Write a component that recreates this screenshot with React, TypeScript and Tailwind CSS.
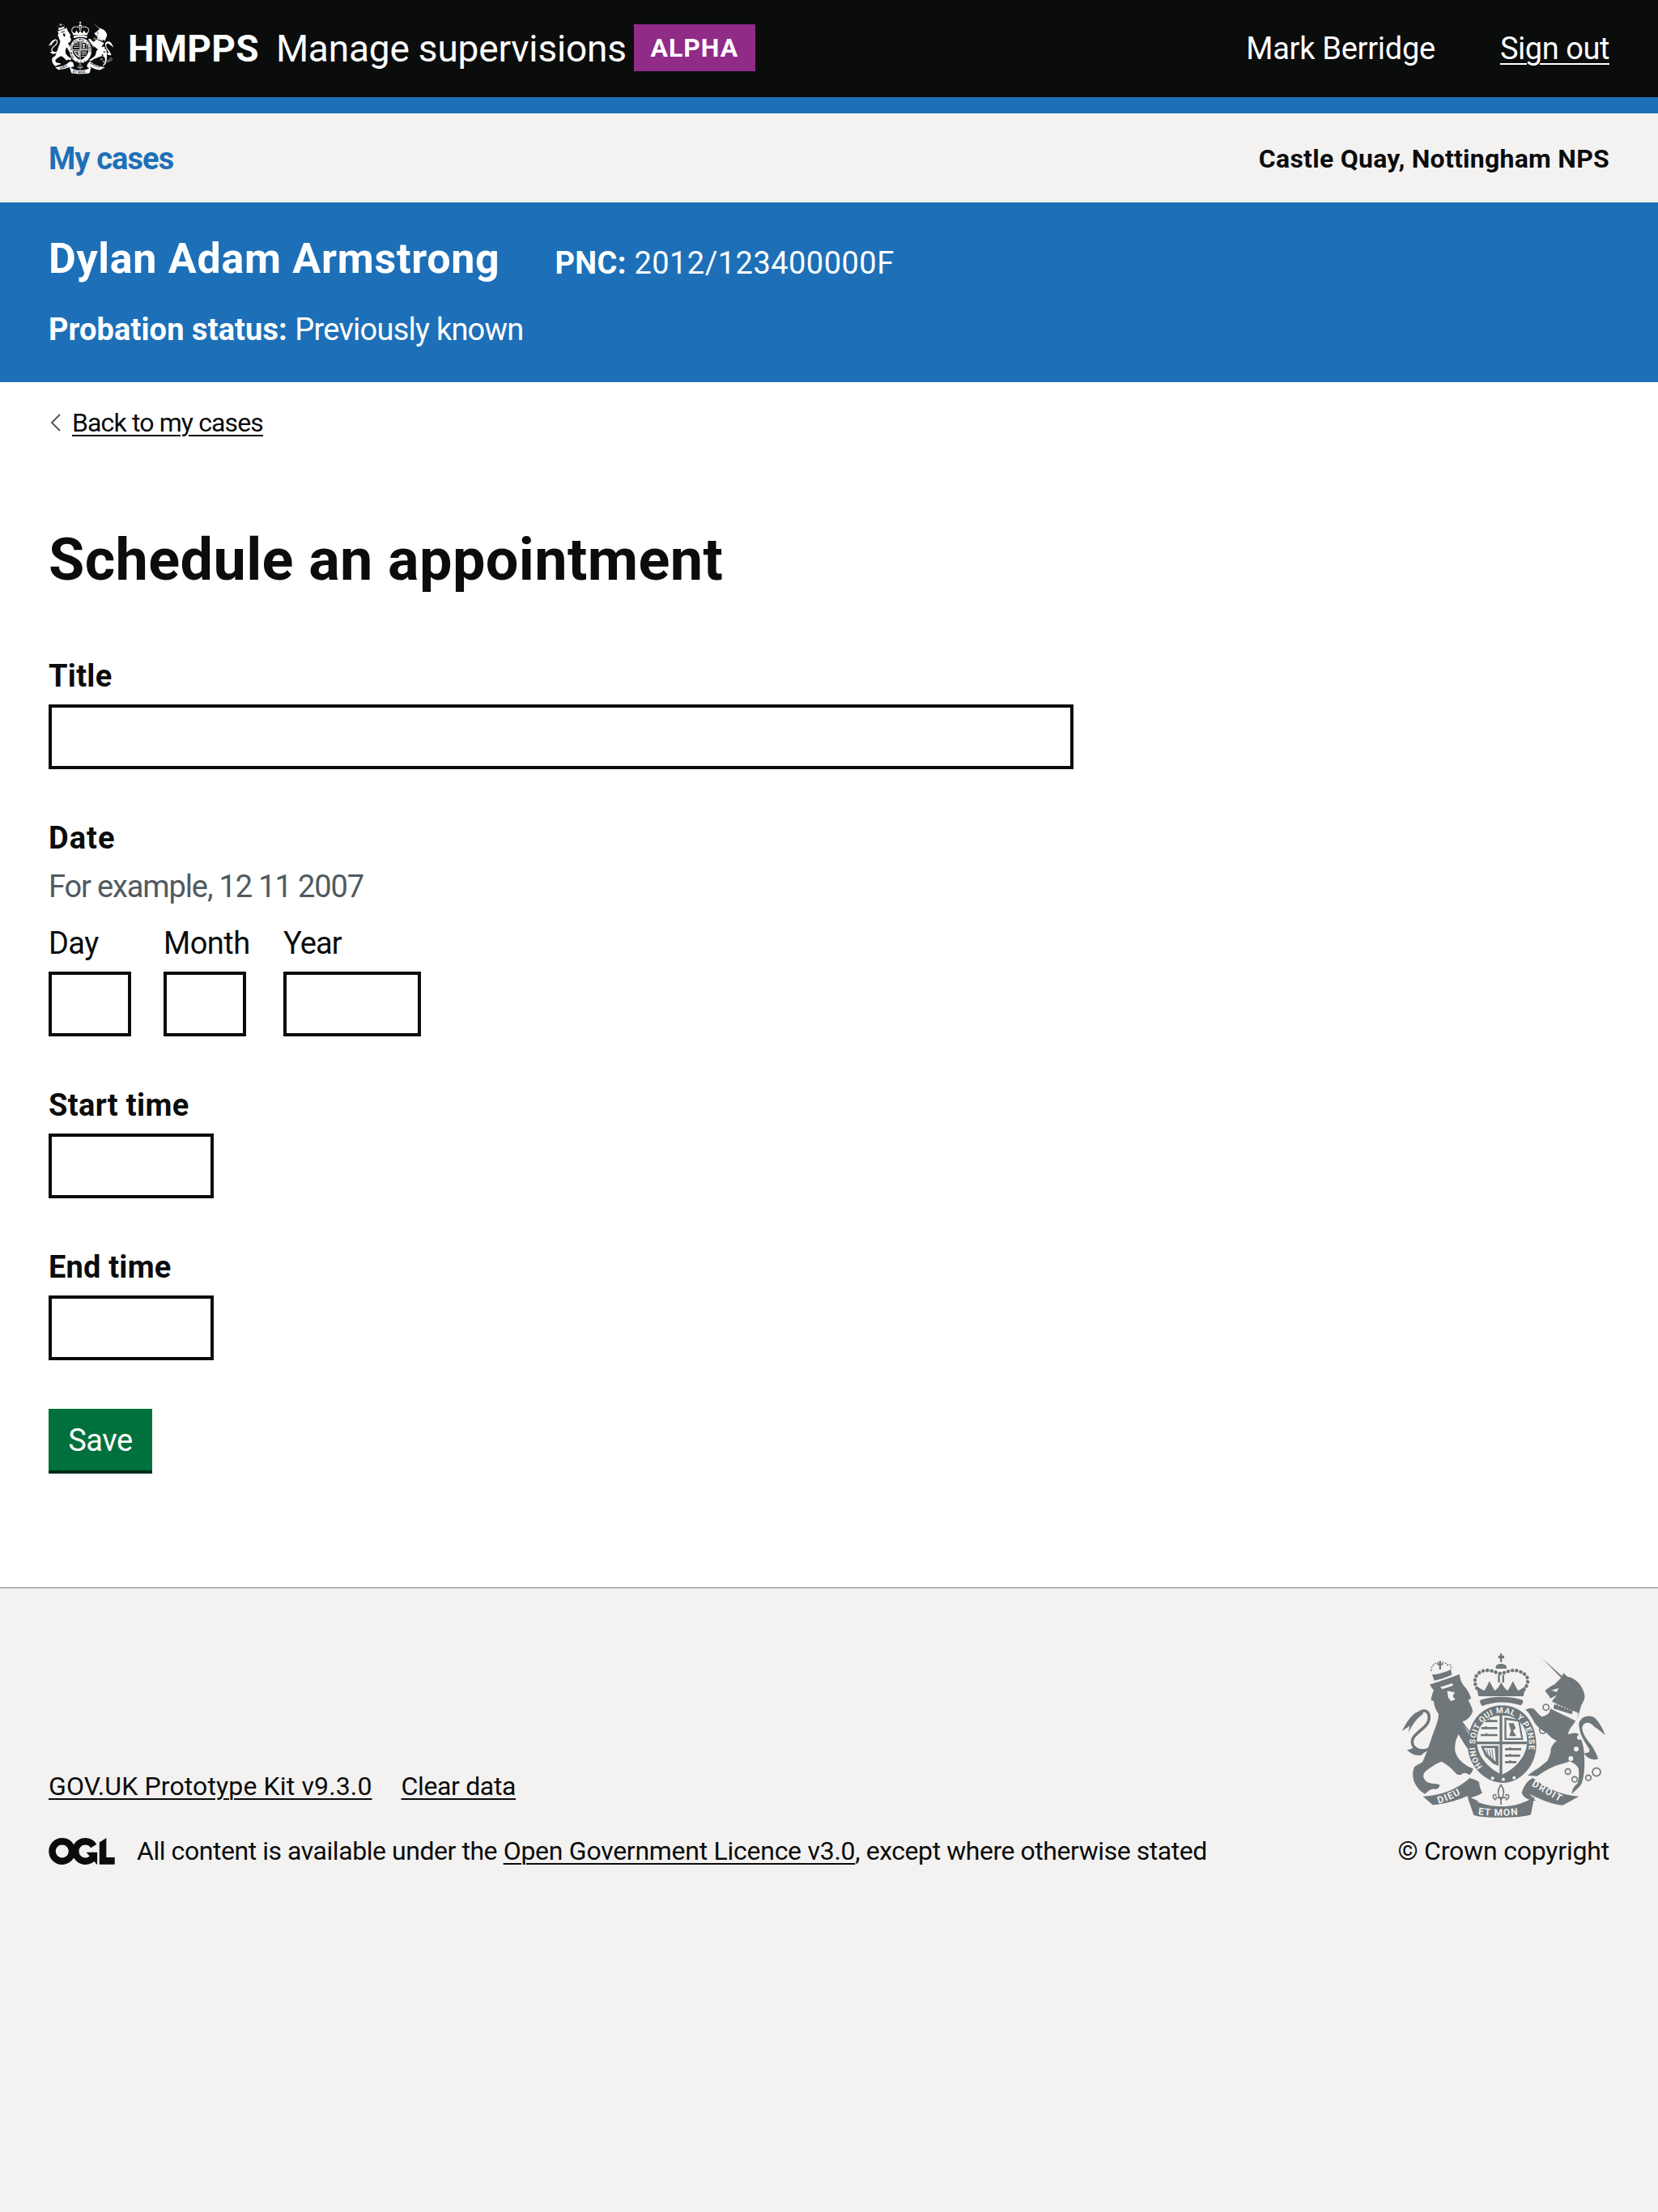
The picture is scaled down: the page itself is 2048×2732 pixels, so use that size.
const ink = "#0b0c0c";

const Crest = ({ fill, bg, id, className }: { fill: string; bg: string; id: string; className: string }) => (
  <svg viewBox="155 125 750 612" className={className} aria-hidden="true">
    <defs>
      <path id={`${id}-garter`} d="M452 545 A100 118 0 1 1 598 545" />
      <path id={`${id}-dieu`} d="M290 682 C330 670 370 652 402 624" />
      <path id={`${id}-mon`} d="M436 722 C480 729 560 729 612 720" />
      <path id={`${id}-droit`} d="M634 616 C670 634 710 660 752 682" />
    </defs>
    <g fill={fill}>
      {/* lion */}
      <path d="M258 240 C290 230 335 215 368 202 C368 222 378 240 392 255 C402 270 408 282 410 292 L400 298 C408 315 416 328 416 340 C410 358 398 372 378 378 C385 400 405 430 428 458 C436 470 432 484 418 486 C404 488 395 476 386 462 C378 448 370 435 364 425 C352 445 348 470 352 490 C358 515 385 540 418 552 C416 562 410 572 404 576 C396 568 388 566 380 570 C372 578 362 578 354 570 C340 552 320 535 300 526 C280 535 255 550 238 566 C230 578 232 590 248 602 C262 610 280 606 294 612 C294 622 288 630 276 628 C262 626 252 634 240 646 C226 640 214 628 205 612 C195 595 190 570 200 546 C210 538 222 535 230 528 C245 500 262 440 280 395 C285 380 290 365 290 350 C280 335 272 318 272 302 L262 300 C262 285 268 272 272 262 C266 255 260 248 258 240 Z" />
      <path d="M232 336 C195 340 170 380 155 414 C168 402 176 400 184 392 C180 405 180 410 178 418 C190 400 200 372 232 350 Z" />
      <path d="M258 478 C218 498 182 472 195 440 C212 410 262 395 254 354 C250 338 236 334 222 342" fill="none" stroke={fill} strokeWidth="11" />
      <path d="M196 476 L172 484 C190 494 196 506 226 502 L246 486 Z" />
      {/* lion crown */}
      <path d="M266 204 L274 226 C295 222 320 214 340 204 L334 186 C312 196 290 202 266 204 Z" />
      <path d="M285 162 h7 v-9 h7 v9 h7 v7 h-7 v16 h-7 v-16 h-7 z" />
      {/* crown */}
      <path d="M511 133 h7 v-7 h7 v7 h8 v11 h-8 v14 h-7 v-14 h-7 z" />
      <path d="M502 176 C502 160 540 160 542 176 L542 182 L502 182 Z" />
      <path d="M510 205 h7 v28 h-7 z M526 205 h7 v28 h-7 z" />
      <path d="M522 232 C528 245 536 256 546 264 C552 252 560 240 566 228 C572 242 578 254 586 264 C594 258 604 252 612 248 L604 284 L438 284 L430 248 C440 252 450 258 458 264 C466 254 472 242 478 228 C484 240 492 252 498 264 C508 256 516 245 522 232 Z" />
      <path d="M444 298 C490 282 555 282 602 298 C604 306 600 314 594 318 C550 302 495 302 452 320 C446 314 442 306 444 298 Z" />
      {/* garter */}
      <path fillRule="evenodd" d="M525 318 C605 318 652 385 652 465 C652 545 590 605 530 605 C465 605 398 545 398 465 C398 385 445 318 525 318 Z M525 355 C465 355 432 395 432 450 C432 510 480 555 525 575 C570 555 618 510 618 450 C618 395 585 355 525 355 Z" />
      {/* shield quarters */}
      <path d="M462 372 h12 l5 -4 l5 4 h24 v8 h-46 z M448 398 h12 l5 -4 l5 4 h38 v8 h-60 z M446 424 h16 l5 -4 l5 4 h36 v8 h-62 z" />
      <path fillRule="evenodd" d="M534 362 L590 372 L604 446 L534 446 Z M541 372 L541 439 L596 439 L585 378 Z" />
      <path d="M550 384 L568 384 L576 402 L566 412 L578 432 L552 432 L558 412 Z" />
      <path d="M536 476 h14 l5 -4 l5 4 h36 v8 h-60 z M536 500 h14 l5 -4 l5 4 h32 v8 h-56 z M536 524 h14 l5 -4 l5 4 h18 v8 h-42 z" />
      <path fillRule="evenodd" d="M446 468 L512 468 L512 542 L492 534 L462 505 Z M458 476 L498 476 L502 526 L470 498 Z" />
      <path d="M468 480 L474 502 M478 480 L484 510 M488 480 L492 518" stroke={fill} strokeWidth="3" />
      <path d="M516 348 h10 v232 h-10 z M428 452 h190 v10 h-190 z" />
      {/* unicorn */}
      <path d="M672 142 L748 210 L752 198 L768 212 C790 215 812 232 822 255 C830 270 834 285 830 295 L818 320 C812 345 805 362 800 372 C785 395 772 408 770 425 C785 420 800 418 808 424 C822 445 830 475 830 510 C832 545 830 580 820 608 C812 622 798 632 784 646 C784 632 790 618 804 608 C810 590 812 570 808 550 C800 538 788 530 776 525 C760 532 745 535 730 540 C715 545 700 552 690 558 C675 565 665 575 655 580 L620 578 C632 568 645 558 660 550 C672 540 684 532 692 525 C700 510 706 495 706 478 C712 465 718 455 728 450 C712 442 700 432 690 420 C672 410 650 395 640 372 C632 358 625 345 612 334 C622 328 634 326 642 330 C652 340 660 352 672 360 C684 358 694 352 700 345 C706 330 708 315 712 300 C718 292 724 286 728 280 L704 292 L698 282 L684 264 C695 252 710 245 722 238 C730 230 738 222 744 216 Z" />
      <path d="M812 402 C800 370 840 345 870 365 C885 380 900 405 906 428 C890 412 880 405 868 398 C850 375 825 378 822 402 C825 440 860 460 870 490 C880 505 878 512 882 516 C860 525 835 510 830 495 C845 495 852 490 848 480 C835 455 815 435 812 402 Z" />
      {/* scroll */}
      <path d="M232 655 C300 652 360 628 405 587 C420 590 432 596 440 602 C440 615 446 630 452 642 C438 652 422 656 410 660 L440 674 C420 676 404 670 396 654 C360 670 320 682 268 687 Z" />
      <path d="M398 660 C440 680 470 692 522 692 C570 692 610 680 645 655 L632 722 C600 737 450 737 420 724 Z" />
      <path d="M640 587 C680 620 740 650 810 655 L750 688 C710 685 665 665 628 646 L650 672 C622 670 604 660 598 642 C606 614 622 594 640 587 Z" />
    </g>
    <g fill="none" stroke={fill}>
      <path d="M262 190 C262 155 310 150 322 168 C340 160 340 185 330 192" strokeWidth="5" strokeDasharray="5 5" />
      <path d="M432 255 C405 205 455 170 508 198 C535 210 560 165 612 205 C630 225 615 250 606 260" strokeWidth="13" strokeDasharray="1 15" strokeLinecap="round" />
      <path d="M375 378 L428 448" strokeWidth="5" />
      <circle cx="688" cy="325" r="11" strokeWidth="5" />
      <circle cx="676" cy="410" r="12" strokeWidth="5" />
      <circle cx="769" cy="563" r="10" strokeWidth="5" />
      <circle cx="794" cy="592" r="10" strokeWidth="5" />
      <circle cx="845" cy="586" r="10" strokeWidth="5" />
      <circle cx="875" cy="565" r="15" strokeWidth="5" />
      {/* fleur */}
      <path d="M521 612 C508 630 508 650 521 668 C534 650 534 630 521 612 Z M505 652 C488 640 488 665 504 668 M537 652 C554 640 554 665 538 668 M500 660 H542 M521 668 V686" strokeWidth="5" />
    </g>
    <g fill={bg}>
      <path d="M296 250 L340 236 L344 244 L304 258 Z" />
      <path d="M322 264 L350 270 L342 284 L352 296 L336 302 L325 288 Z" />
      <circle cx="812" cy="436" r="9" />
      <circle cx="800" cy="480" r="9" />
      <circle cx="780" cy="515" r="9" />
      <circle cx="490" cy="588" r="6" />
      <circle cx="530" cy="592" r="6" />
      <circle cx="570" cy="586" r="6" />
      <path d="M710 304 L808 346 L800 376 L704 330 Z" />
      <path d="M708 262 L735 254 L728 268 Z" />
    </g>
    <g fill={fill}>
      <path d="M716 322 l4 -10 l5 6 l5 -8 l5 12 l6 -8 l5 12 l6 -8 l5 12 l6 -8 l5 12 l6 -8 l5 12 l5 -7 l3 12 l-4 8 L716 330 Z" />
    </g>
    <g fill={bg} fontFamily="Roboto, sans-serif" fontWeight="700">
      <text fontSize="30" letterSpacing="2"><textPath href={`#${id}-garter`}>HONI SOIT QUI MAL Y PENSE</textPath></text>
      <text fontSize="36" letterSpacing="4"><textPath href={`#${id}-dieu`}>DIEU</textPath></text>
      <text fontSize="36" letterSpacing="3"><textPath href={`#${id}-mon`}>ET MON</textPath></text>
      <text fontSize="36" letterSpacing="4"><textPath href={`#${id}-droit`}>DROIT</textPath></text>
    </g>
  </svg>
);

const Field = ({ label, width, tracking }: { label: string; width: string; tracking: string }) => (
  <div className="mb-[60px]">
    <label className={`block h-[50px] mb-[10px] text-[38px] leading-[50px] font-bold ${tracking}`}>{label}</label>
    <div className={`h-[80px] border-[4px] border-[#0b0c0c] ${width}`} />
  </div>
);

const DatePart = ({ label, width, gap, tracking }: { label: string; width: string; gap: string; tracking: string }) => (
  <div className={gap}>
    <div className={`h-[50px] mb-[10px] text-[38px] leading-[50px] ${tracking}`}>{label}</div>
    <div className={`h-[80px] border-[4px] border-[#0b0c0c] ${width}`} />
  </div>
);

export default function App() {
  return (
    <div className="min-h-[2732px] flex flex-col bg-white text-[#0b0c0c] font-['Roboto',sans-serif]">
      <header className="h-[120px] bg-[#0b0c0c] text-white flex items-center justify-between pl-[60px] pr-[60px]">
        <div className="flex items-center">
          <Crest fill="#ffffff" bg={ink} id="head" className="w-[80px] h-[66px] mt-[-2px]" />
          <span className="ml-[18px] text-[46px] leading-[60px] font-bold tracking-[0.3px]">HMPPS</span>
          <span className="ml-[21px] text-[46px] leading-[60px] tracking-[-0.18px]">Manage supervisions</span>
          <span className="ml-[9px] h-[58px] w-[150px] mt-[-2px] bg-[#912b88] flex items-center justify-center text-[32px] font-bold tracking-[1px]">ALPHA</span>
        </div>
        <div className="flex items-center text-[38px] leading-[50px]">
          <span className="tracking-[-0.27px]">Mark Berridge</span>
          <a className="ml-[80px] underline underline-offset-[5px] decoration-[2px] tracking-[-0.44px]">Sign out</a>
        </div>
      </header>
      <div className="h-[20px] bg-[#1d70b8]" />

      <nav className="h-[110px] bg-[#f3f2f1] flex items-center justify-between px-[60px]">
        <a className="mt-[2px] text-[38px] leading-[50px] font-bold text-[#1d70b8] tracking-[-0.9px]">My cases</a>
        <span className="mt-[2px] text-[32px] leading-[40px] font-bold tracking-[0.26px]">Castle Quay, Nottingham NPS</span>
      </nav>

      <section className="h-[222px] bg-[#1d70b8] text-white px-[60px] pt-[38px]">
        <div className="flex items-start h-[64px]">
          <span className="text-[52px] leading-[64px] font-bold tracking-[0.7px]">Dylan Adam Armstrong</span>
          <span className="ml-[68px] mt-[12px] text-[38px] leading-[50px]">
            <b className="font-bold tracking-[0.4px]">PNC:</b> <span className="tracking-[0.46px]">2012/123400000F</span>
          </span>
        </div>
        <div className="mt-[30px] text-[38px] leading-[50px]">
          <b className="font-bold tracking-[0.1px]">Probation status:</b> <span className="tracking-[-0.76px]">Previously known</span>
        </div>
      </section>

      <main className="px-[60px] h-[1488px] shrink-0">
        <a className="mt-[30px] flex items-center h-[40px] text-[32px] leading-[40px]">
          <svg width="16" height="24" viewBox="0 0 16 24" className="mr-[12px] ml-[1px]" aria-hidden="true">
            <path d="M13 2 L3 12 L13 22" fill="none" stroke="#505a5f" strokeWidth="2" />
          </svg>
          <span className="underline underline-offset-[4px] decoration-[2px] tracking-[-0.87px]">Back to my cases</span>
        </a>
        <h1 className="mt-[110px] mb-[78px] h-[80px] text-[72px] leading-[80px] font-bold tracking-[0.38px]">Schedule an appointment</h1>

        <Field label="Title" width="w-[1266px]" tracking="tracking-[0.3px]" />

        <div className="mb-[60px]">
          <div className="h-[50px] mb-[10px] text-[38px] leading-[50px] font-bold tracking-[1px]">Date</div>
          <div className="h-[50px] mb-[20px] text-[38px] leading-[50px] text-[#505a5f] tracking-[-1.13px]">For example, 12 11 2007</div>
          <div className="flex">
            <DatePart label="Day" width="w-[102px]" gap="w-[142px]" tracking="tracking-[-0.6px]" />
            <DatePart label="Month" width="w-[102px]" gap="w-[148px]" tracking="tracking-[-0.5px]" />
            <DatePart label="Year" width="w-[170px]" gap="" tracking="tracking-[-0.9px]" />
          </div>
        </div>

        <Field label="Start time" width="w-[204px]" tracking="tracking-[0.35px]" />
        <Field label="End time" width="w-[204px]" tracking="tracking-[0.2px]" />

        <button className="w-[128px] h-[76px] pt-[2px] bg-[#00703c] shadow-[0_4px_0_#002d18] text-white text-[38px] leading-[50px] tracking-[-0.4px]">Save</button>
      </main>

      <footer className="flex-1 bg-[#f3f2f1] border-t-[2px] border-[#b1b4b6] px-[60px] pt-[80px]">
        <div className="flex items-end justify-between">
          <div className="text-[32px] leading-[40px] mb-[6px]">
            <div className="flex h-[40px] mb-[40px]">
              <a className="underline underline-offset-[4px] decoration-[2px] tracking-[0.13px]">GOV.UK Prototype Kit v9.3.0</a>
              <a className="ml-[36px] underline underline-offset-[4px] decoration-[2px] tracking-[-0.35px]">Clear data</a>
            </div>
            <div className="flex items-center">
              <svg viewBox="0 0 483.2 195.7" className="w-[82px] h-[33px] mr-[27px]" aria-hidden="true">
                <path fill="#0b0c0c" d="M421.5 142.8V.1l-50.7 32.3v161.1h112.4v-50.7zm-122.3-9.6A47.12 47.12 0 0 1 221 97.8c0-26 21.1-47.1 47.1-47.1 16.7 0 31.4 8.7 39.7 21.8l42.7-27.2A97.63 97.63 0 0 0 268.1 0c-36.5 0-68.3 20.1-85.1 49.7A98 98 0 0 0 97.8 0C43.9 0 0 43.9 0 97.8s43.9 97.8 97.8 97.8c36.5 0 68.3-20.1 85.1-49.7a97.76 97.76 0 0 0 149.6 25.4l19.4 22.2h3v-87.8h-80l24.3 27.5zM97.8 145c-26 0-47.1-21.1-47.1-47.1s21.1-47.1 47.1-47.1 47.2 21 47.2 47S123.8 145 97.8 145" />
              </svg>
              <span className="tracking-[-0.45px]">
                All content is available under the{" "}
                <a className="underline underline-offset-[4px] decoration-[2px] tracking-[-0.27px]">Open Government Licence v3.0</a>, except where otherwise stated
              </span>
            </div>
          </div>
          <div className="flex flex-col items-end mb-[6px]">
            <Crest fill="#6f777b" bg="#f3f2f1" id="foot" className="w-[250px] h-[204px] mr-[6px] mb-[20px]" />
            <span className="text-[32px] leading-[40px] tracking-[-0.2px]">© Crown copyright</span>
          </div>
        </div>
      </footer>
    </div>
  );
}
